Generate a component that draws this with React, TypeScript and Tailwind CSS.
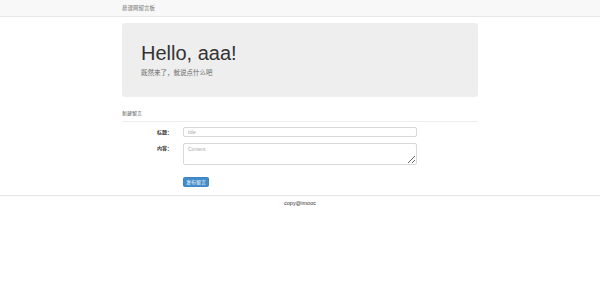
export default function App() {
  const font = { fontFamily: '"Liberation Sans", "Noto Sans CJK SC", Arial, sans-serif' };
  return (
    <div className="min-h-[293px] bg-white text-[#333]" style={font}>
      <div className="h-[17px] bg-[#f8f8f8] border-b border-[#e7e7e7] box-border">
        <div className="w-[356px] mx-auto text-[5.5px] leading-[16px] text-[#777]">慕课网留言板</div>
      </div>
      <div className="w-[356px] mx-auto">
        <div className="mt-[6px] h-[74px] bg-[#eeeeee] rounded-[3px] pl-[19px] pt-[19px] box-border">
          <h1 className="text-[20px] leading-[22px] text-[#333] font-normal">Hello, aaa!</h1>
          <p className="mt-[4px] text-[6.5px] leading-[10px] text-[#666]">既然来了，就说点什么吧</p>
        </div>
        <div className="mt-[12px] pb-[4px] border-b border-[#eeeeee] text-[5px] leading-[8px] text-[#555]">新建留言</div>
        <form className="mt-[5px]" onSubmit={(e) => e.preventDefault()}>
          <div className="flex items-center">
            <label className="w-[50px] text-right text-[5px] font-bold leading-[10px] text-[#333]">标题：</label>
            <input
              className="ml-[11px] w-[234px] h-[10px] box-border border border-[#d9d9d9] rounded-[2px] px-[4px] text-[5px] text-[#555] placeholder:text-[#aaa] outline-none"
              placeholder="title"
            />
          </div>
          <div className="flex items-start mt-[6px]">
            <label className="w-[50px] text-right text-[5px] font-bold leading-[10px] text-[#333]">内容：</label>
            <textarea
              className="ml-[11px] w-[234px] h-[22px] box-border border border-[#d9d9d9] rounded-[2px] px-[4px] py-[2px] text-[5px] leading-[7px] text-[#555] placeholder:text-[#aaa] outline-none resize-y"
              placeholder="Content"
            />
          </div>
          <div className="flex mt-[12px]">
            <div className="w-[61px]" />
            <button className="w-[26px] h-[10px] bg-[#428bca] border border-[#3d85c4] rounded-[1.5px] text-white text-[5px] leading-[8px]">发布留言</button>
          </div>
        </form>
      </div>
      <div className="mt-[8px] border-t border-[#e5e5e5] pt-[3px] text-center text-[5.5px] leading-[9px] text-[#333]">copy@imooc</div>
    </div>
  );
}
